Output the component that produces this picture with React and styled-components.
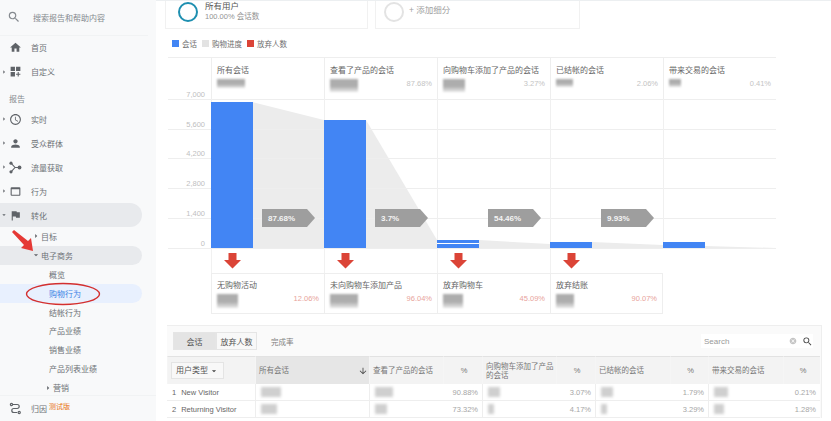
import React from "react";
import styled, { createGlobalStyle } from "styled-components";
import {
  MdSearch,
  MdHome,
  MdDashboardCustomize,
  MdAccessTime,
  MdPerson,
  MdWebAsset,
  MdFlag,
  MdArrowDownward,
  MdArrowDropDown,
  MdArrowRight,
  MdCancel,
} from "react-icons/md";

const GlobalStyle = createGlobalStyle`
  html, body {
    margin: 0;
    padding: 0;
    background: #fff;
  }
  body {
    font-family: "Liberation Sans", "Noto Sans CJK SC", sans-serif;
    font-size: 8px;
    color: #5f6368;
  }
`;

const Page = styled.div`
  display: flex;
  width: 831px;
  height: 421px;
  overflow: hidden;
`;

/* sidebar */
const Sidebar = styled.aside`
  position: relative;
  flex: 0 0 156px;
  display: flex;
  flex-direction: column;
  background: #f8f9fa;
`;

const SearchRow = styled.div`
  display: flex;
  align-items: center;
  height: 36px;
  padding-left: 7px;
  gap: 12px;
  color: #858a8f;
  border-bottom: 1px solid #f1f3f4;
  box-sizing: border-box;
  margin-right: 8px;
  font-size: 8px;
  svg {
    font-size: 14px;
  }
`;

const NavRow = styled.div`
  display: flex;
  align-items: center;
  height: ${({ $h }) => $h || 24}px;
  padding-left: ${({ $indent }) => $indent || 0}px;
  margin-right: 14px;
  border-radius: 0 12px 12px 0;
  background: ${({ $bg }) => $bg || "transparent"};
  color: ${({ $color }) => $color || "#6d7176"};
  white-space: nowrap;
  font-size: 8px;
`;

const Caret = styled.span`
  display: flex;
  justify-content: center;
  width: ${({ $w }) => $w || 8}px;
  flex: none;
  color: #5f6368;
  font-size: 10px;
`;

const NavIcon = styled.span`
  display: flex;
  justify-content: center;
  align-items: center;
  width: 14px;
  margin-right: 9px;
  color: #5f6368;
  font-size: 13px;
`;

const SectionLabel = styled.div`
  height: 24px;
  padding: 9px 0 0 9px;
  box-sizing: border-box;
  font-size: 8px;
  color: #858a8f;
`;

const BottomRow = styled.div`
  display: flex;
  align-items: center;
  height: 25px;
  margin-top: -2px;
  border-top: 1px solid #f1f3f4;
  padding-left: 8px;
  font-size: 8px;
  color: #6d7176;
`;

const Beta = styled.span`
  margin: -6px 0 0 2px;
  color: #e8710a;
  font-size: 7px;
`;

const Annotation = styled.svg`
  position: absolute;
  left: 0;
  top: 0;
  pointer-events: none;
`;

/* main column */
const Main = styled.main`
  flex: 1;
  display: flex;
  flex-direction: column;
  border-top: 1px solid #eceff1;
`;

const Segments = styled.div`
  display: flex;
  gap: 7px;
  height: 28px;
  margin-left: 9px;
`;

const SegmentCard = styled.div`
  display: flex;
  gap: ${({ $gap }) => $gap}px;
  width: ${({ $w }) => $w}px;
  padding: 1px 0 0 ${({ $pad }) => $pad}px;
  box-sizing: border-box;
  border: 1px solid #f1f1f1;
  border-top: 0;
`;

const Ring = styled.span`
  width: 20px;
  height: 20px;
  margin-right: 1px;
  border-radius: 50%;
  box-sizing: border-box;
  border: 2.5px solid ${({ $color }) => $color};
`;

const SegmentName = styled.div`
  color: #555;
  font-size: 8.5px;
  line-height: 9px;
`;

const SegmentSub = styled.div`
  color: #939393;
  font-size: 7.5px;
  line-height: 11px;
`;

const AddSegment = styled.div`
  color: #a0a0a0;
  font-size: 8.5px;
  line-height: 17px;
`;

const Legend = styled.div`
  display: flex;
  align-items: center;
  height: 10px;
  margin: 9px 0 9px 16px;
  font-size: 7.5px;
  color: #707070;
`;

const Swatch = styled.span`
  width: 7px;
  height: 7px;
  margin-right: 3px;
  background: ${({ $color }) => $color};
`;

const LegendLabel = styled.span`
  margin-right: 5px;
`;

const Funnel = styled.div`
  margin-left: 12px;
  width: 608px;
`;

const FunnelRow = styled.div`
  display: grid;
  grid-template-columns: 43px repeat(5, 113px);
  height: ${({ $h }) => $h}px;
`;

const HeaderCell = styled.div`
  padding: 8px 5px 0;
  box-sizing: border-box;
  border-top: 1px solid #eee;
  border-left: ${({ $first }) => ($first ? "0" : "1px solid #eee")};
  color: #666;
  font-size: 8px;
  line-height: 10px;
  white-space: nowrap;
  overflow: hidden;
`;

const Redacted = styled.div`
  width: ${({ $w }) => $w}px;
  height: ${({ $h }) => $h}px;
  background: linear-gradient(#adadad 55%, #e8e8e8);
  filter: blur(1.2px);
`;

const CellRow = styled.div`
  display: flex;
  justify-content: space-between;
  align-items: flex-start;
  margin-top: 3px;
`;

const Pct = styled.span`
  color: ${({ $color }) => $color || "#c4c4c4"};
  font-size: 7.5px;
`;

const DropCell = styled.div`
  display: flex;
  align-items: flex-start;
  padding: 4px 0 0 12px;
  box-sizing: border-box;
  border-left: 1px solid #f1f1f1;
`;

const LossCell = styled.div`
  padding: 7px 5px 0;
  box-sizing: border-box;
  border: 1px solid #eee;
  border-width: 1px 0 1px 1px;
  color: #666;
  font-size: 8px;
  line-height: 10px;
  white-space: nowrap;
  &:nth-child(5) {
    border-right: 1px solid #eee;
  }
`;

const Chart = styled.svg`
  display: block;
  overflow: visible;
  font-family: "Liberation Sans", sans-serif;
`;

/* table */
const TableWrap = styled.section`
  margin: 11px 0 0 11px;
  width: 654px;
  border-top: 1px solid #eee;
  border-right: 1px solid #eee;
  background: #fafafa;
`;

const TableBar = styled.div`
  display: flex;
  align-items: center;
  height: 30px;
  padding: 0 8px 0 6px;
`;

const Tab = styled.span`
  display: flex;
  justify-content: center;
  align-items: center;
  width: ${({ $w }) => $w}px;
  height: 18px;
  box-sizing: border-box;
  border: 1px solid #e5e5e5;
  background: ${({ $active }) => ($active ? "#e4e4e4" : "#f8f8f8")};
  color: #555;
  font-size: 8px;
`;

const PlainTab = styled.span`
  margin-left: 14px;
  color: #808080;
  font-size: 7.5px;
`;

const SearchBox = styled.div`
  display: flex;
  align-items: center;
  justify-content: space-between;
  margin-left: auto;
  width: 112px;
  height: 14px;
  padding-left: 3px;
  box-sizing: border-box;
  background: #fff;
  color: #999;
  font-size: 8px;
`;

const SearchIcons = styled.span`
  display: flex;
  align-items: center;
  gap: 5px;
  color: #c4c4c4;
  font-size: 8px;
  svg:last-child {
    color: #444;
    font-size: 11px;
  }
`;

const TableGrid = styled.div`
  display: grid;
  grid-template-columns: 88px 114px 74px 39px 74px 39px 75px 38px 75px 37px;
`;

const HeadCell = styled.div`
  display: flex;
  align-items: center;
  justify-content: ${({ $center }) => ($center ? "center" : "space-between")};
  height: 28px;
  padding: 0 1px 0 3px;
  box-sizing: border-box;
  border-top: 1px solid #e2e2e2;
  border-left: 1px solid #f5f5f5;
  background: ${({ $sorted }) => ($sorted ? "#e6e6e6" : "#f3f3f3")};
  color: #777;
  font-size: 7.5px;
  line-height: 9px;
  svg {
    color: #444;
    font-size: 10px;
    flex: none;
  }
`;

const TypeSelect = styled.div`
  display: flex;
  align-items: center;
  justify-content: space-between;
  width: 53px;
  height: 17px;
  padding: 0 4px;
  box-sizing: border-box;
  border: 1px solid #e4e4e4;
  background: #f8f8f8;
  color: #555;
  font-size: 8px;
`;

const BodyCell = styled.div`
  display: flex;
  align-items: center;
  justify-content: ${({ $right }) => ($right ? "flex-end" : "flex-start")};
  gap: 5px;
  height: 17px;
  padding: 0 ${({ $right }) => ($right ? 4 : 5)}px;
  box-sizing: border-box;
  background: #fff;
  border-bottom: 1px solid #eee;
  border-left: ${({ $line }) => ($line ? "1px solid #eee" : "0")};
  color: ${({ $right }) => ($right ? "#a6a6a6" : "#666")};
  font-size: 7.5px;
  white-space: nowrap;
`;

const TableBlur = styled.div`
  width: ${({ $w }) => $w}px;
  height: 10px;
  background: #cfcfcf;
  filter: blur(1.4px);
`;

const DropArrow = () => (
  <svg width="17" height="16" viewBox="0 0 17 16">
    <path d="M4.5 0h8v7h4.5L8.5 15.5 0 7h4.5z" fill="#db4437" />
  </svg>
);

const TrafficIcon = () => (
  <svg width="13" height="13" viewBox="0 0 13 13" fill="#5f6368">
    <circle cx="2" cy="2.2" r="1.6" />
    <circle cx="2" cy="10.8" r="1.6" />
    <circle cx="10.5" cy="6.5" r="1.9" />
    <path d="M2 2.2 6 6.5 2 10.8M6 6.5h4" fill="none" stroke="#5f6368" strokeWidth="1.1" />
  </svg>
);

const AttributionIcon = () => (
  <svg width="13" height="13" viewBox="0 0 13 13" fill="none" stroke="#5f6368" strokeWidth="1.2">
    <circle cx="2.5" cy="2.5" r="1.1" />
    <path d="M4 2.5h4.2a2 2 0 0 1 0 4H4.8a2 2 0 0 0 0 4h3.4" />
    <circle cx="10.2" cy="10.5" r="1.1" />
  </svg>
);

const axis = [
  ["7,000", 99],
  ["5,600", 129],
  ["4,200", 158],
  ["2,800", 188],
  ["1,400", 218],
  ["0", 248],
];
const columnsX = [211, 324, 437, 550, 663];
const bars = [
  [211, 102],
  [324, 120],
  [437, 240],
  [550, 242],
  [663, 242],
];
const flows = [
  "252,102 324,120 324,248 252,248",
  "366,120 437,240 437,248 366,248",
  "479,240 550,244 550,248 479,248",
  "592,242 663,245 663,248 592,248",
  "705,246 776,248 705,248",
];
const rates = [
  [262, "87.68%"],
  [375, "3.7%"],
  [488, "54.46%"],
  [601, "9.93%"],
];

const FunnelChart = () => (
  <Chart width="608" height="150" viewBox="168 99 608 150">
    {flows.map((points) => (
      <polygon key={points} points={points} fill="#ececec" />
    ))}
    {axis.map(([label, y]) => (
      <g key={label}>
        <line x1="168" x2="776" y1={y + 0.5} y2={y + 0.5} stroke="#eee" />
        <text x="205" y={y - 2} textAnchor="end" fontSize="7.5" fill="#c0c0c0">
          {label}
        </text>
      </g>
    ))}
    {columnsX.map((x) => (
      <line key={x} x1={x + 0.5} x2={x + 0.5} y1="99" y2="249" stroke="#f0f0f0" />
    ))}
    {bars.map(([x, y]) => (
      <rect key={x} x={x} y={y} width="42" height={248 - y} fill="#4285f4" />
    ))}
    <line x1="437" x2="479" y1="243.5" y2="243.5" stroke="#fff" />
    {rates.map(([x, label]) => (
      <g key={x}>
        <polygon
          points={`${x},209 ${x + 45},209 ${x + 53},218 ${x + 45},227 ${x},227`}
          fill="#9e9e9e"
        />
        <text x={x + 6} y="221" fontSize="8" fontWeight="700" fill="#f4f4f4">
          {label}
        </text>
      </g>
    ))}
  </Chart>
);

const steps = [
  { title: "所有会话", w: 28, h: 9 },
  { title: "查看了产品的会话", w: 28, h: 13, pct: "87.68%" },
  { title: "向购物车添加了产品的会话", w: 22, h: 13, pct: "3.27%" },
  { title: "已结帐的会话", w: 17, h: 8, pct: "2.06%" },
  { title: "带来交易的会话", w: 12, h: 8, pct: "0.41%" },
];

const losses = [
  { title: "无购物活动", w: 21, pct: "12.06%" },
  { title: "未向购物车添加产品", w: 28, pct: "96.04%" },
  { title: "放弃购物车", w: 20, pct: "45.09%" },
  { title: "放弃结账", w: 18, pct: "90.07%" },
];

const headers = [
  "查看了产品的会话",
  "%",
  "向购物车添加了产品的会话",
  "%",
  "已结帐的会话",
  "%",
  "带来交易的会话",
  "%",
];

const rows = [
  { index: 1, name: "New Visitor", all: 20, cells: [[18, "90.88%"], [12, "3.07%"], [12, "1.79%"], [14, "0.21%"]] },
  { index: 2, name: "Returning Visitor", all: 16, cells: [[12, "73.32%"], [6, "4.17%"], [6, "3.29%"], [10, "1.28%"]] },
];

const App = () => (
  <Page>
    <GlobalStyle />
    <Sidebar>
      <SearchRow>
        <MdSearch />
        <span>搜索报告和帮助内容</span>
      </SearchRow>
      <NavRow>
        <Caret />
        <NavIcon><MdHome /></NavIcon>
        首页
      </NavRow>
      <NavRow>
        <Caret><MdArrowRight /></Caret>
        <NavIcon><MdDashboardCustomize /></NavIcon>
        自定义
      </NavRow>
      <SectionLabel>报告</SectionLabel>
      <NavRow>
        <Caret><MdArrowRight /></Caret>
        <NavIcon><MdAccessTime /></NavIcon>
        实时
      </NavRow>
      <NavRow>
        <Caret><MdArrowRight /></Caret>
        <NavIcon><MdPerson /></NavIcon>
        受众群体
      </NavRow>
      <NavRow>
        <Caret><MdArrowRight /></Caret>
        <NavIcon><TrafficIcon /></NavIcon>
        流量获取
      </NavRow>
      <NavRow>
        <Caret><MdArrowRight /></Caret>
        <NavIcon><MdWebAsset /></NavIcon>
        行为
      </NavRow>
      <NavRow $bg="#e8eaed">
        <Caret><MdArrowDropDown /></Caret>
        <NavIcon><MdFlag /></NavIcon>
        转化
      </NavRow>
      <NavRow $h={19} $indent={31}>
        <Caret $w={10}><MdArrowRight /></Caret>
        目标
      </NavRow>
      <NavRow $h={19} $indent={31} $bg="#e8eaed">
        <Caret $w={10}><MdArrowDropDown /></Caret>
        电子商务
      </NavRow>
      <NavRow $h={19} $indent={49}>概览</NavRow>
      <NavRow $h={19} $indent={49} $bg="#e8f0fe" $color="#3f84e5">购物行为</NavRow>
      <NavRow $h={19} $indent={49}>结帐行为</NavRow>
      <NavRow $h={19} $indent={49}>产品业绩</NavRow>
      <NavRow $h={19} $indent={49}>销售业绩</NavRow>
      <NavRow $h={19} $indent={49}>产品列表业绩</NavRow>
      <NavRow $h={19} $indent={43}>
        <Caret $w={10}><MdArrowRight /></Caret>
        营销
      </NavRow>
      <BottomRow>
        <NavIcon><AttributionIcon /></NavIcon>
        归因
        <Beta>测试版</Beta>
      </BottomRow>
      <Annotation width="156" height="421" viewBox="0 0 156 421">
        <ellipse cx="63" cy="294" rx="36.5" ry="10.5" fill="none" stroke="#d32f2f" strokeWidth="1.4" />
        <polygon points="12,232 14,230 28,241 31,238 33,251 21,248 24,245" fill="#e53935" />
      </Annotation>
    </Sidebar>

    <Main>
      <Segments>
        <SegmentCard $w={203} $pad={12} $gap={6}>
          <Ring $color="#1e8fb0" />
          <div>
            <SegmentName>所有用户</SegmentName>
            <SegmentSub>100.00% 会话数</SegmentSub>
          </div>
        </SegmentCard>
        <SegmentCard $w={205} $pad={8} $gap={4}>
          <Ring $color="#e3e3e3" />
          <AddSegment>+ 添加细分</AddSegment>
        </SegmentCard>
      </Segments>

      <Legend>
        <Swatch $color="#4285f4" />
        <LegendLabel>会话</LegendLabel>
        <Swatch $color="#e3e3e3" />
        <LegendLabel>购物进度</LegendLabel>
        <Swatch $color="#db4437" />
        <LegendLabel>放弃人数</LegendLabel>
      </Legend>

      <Funnel>
        <FunnelRow $h={42}>
          <HeaderCell $first />
          {steps.map((step) => (
            <HeaderCell key={step.title}>
              {step.title}
              <CellRow>
                <Redacted $w={step.w} $h={step.h} />
                {step.pct && <Pct>{step.pct}</Pct>}
              </CellRow>
            </HeaderCell>
          ))}
        </FunnelRow>
        <FunnelChart />
        <FunnelRow $h={24}>
          <div />
          {losses.map((loss) => (
            <DropCell key={loss.title}>
              <DropArrow />
            </DropCell>
          ))}
        </FunnelRow>
        <FunnelRow $h={41}>
          <div />
          {losses.map((loss) => (
            <LossCell key={loss.title}>
              {loss.title}
              <CellRow>
                <Redacted $w={loss.w} $h={14} />
                <Pct $color="#e8a39b">{loss.pct}</Pct>
              </CellRow>
            </LossCell>
          ))}
        </FunnelRow>
      </Funnel>

      <TableWrap>
        <TableBar>
          <Tab $w={43} $active>会话</Tab>
          <Tab $w={41}>放弃人数</Tab>
          <PlainTab>完成率</PlainTab>
          <SearchBox>
            Search
            <SearchIcons>
              <MdCancel />
              <MdSearch />
            </SearchIcons>
          </SearchBox>
        </TableBar>
        <TableGrid>
          <HeadCell>
            <TypeSelect>
              用户类型
              <MdArrowDropDown />
            </TypeSelect>
          </HeadCell>
          <HeadCell $sorted>
            所有会话
            <MdArrowDownward />
          </HeadCell>
          {headers.map((label, i) => (
            <HeadCell key={i} $center={label === "%"}>
              {label}
            </HeadCell>
          ))}
          {rows.map((row) => (
            <React.Fragment key={row.name}>
              <BodyCell>
                <span>{row.index}</span>
                <span>{row.name}</span>
              </BodyCell>
              <BodyCell $line><TableBlur $w={row.all} /></BodyCell>
              {row.cells.map(([w, pct]) => (
                <React.Fragment key={pct}>
                  <BodyCell $line><TableBlur $w={w} /></BodyCell>
                  <BodyCell $right>{pct}</BodyCell>
                </React.Fragment>
              ))}
            </React.Fragment>
          ))}
        </TableGrid>
      </TableWrap>
    </Main>
  </Page>
);

export default App;
